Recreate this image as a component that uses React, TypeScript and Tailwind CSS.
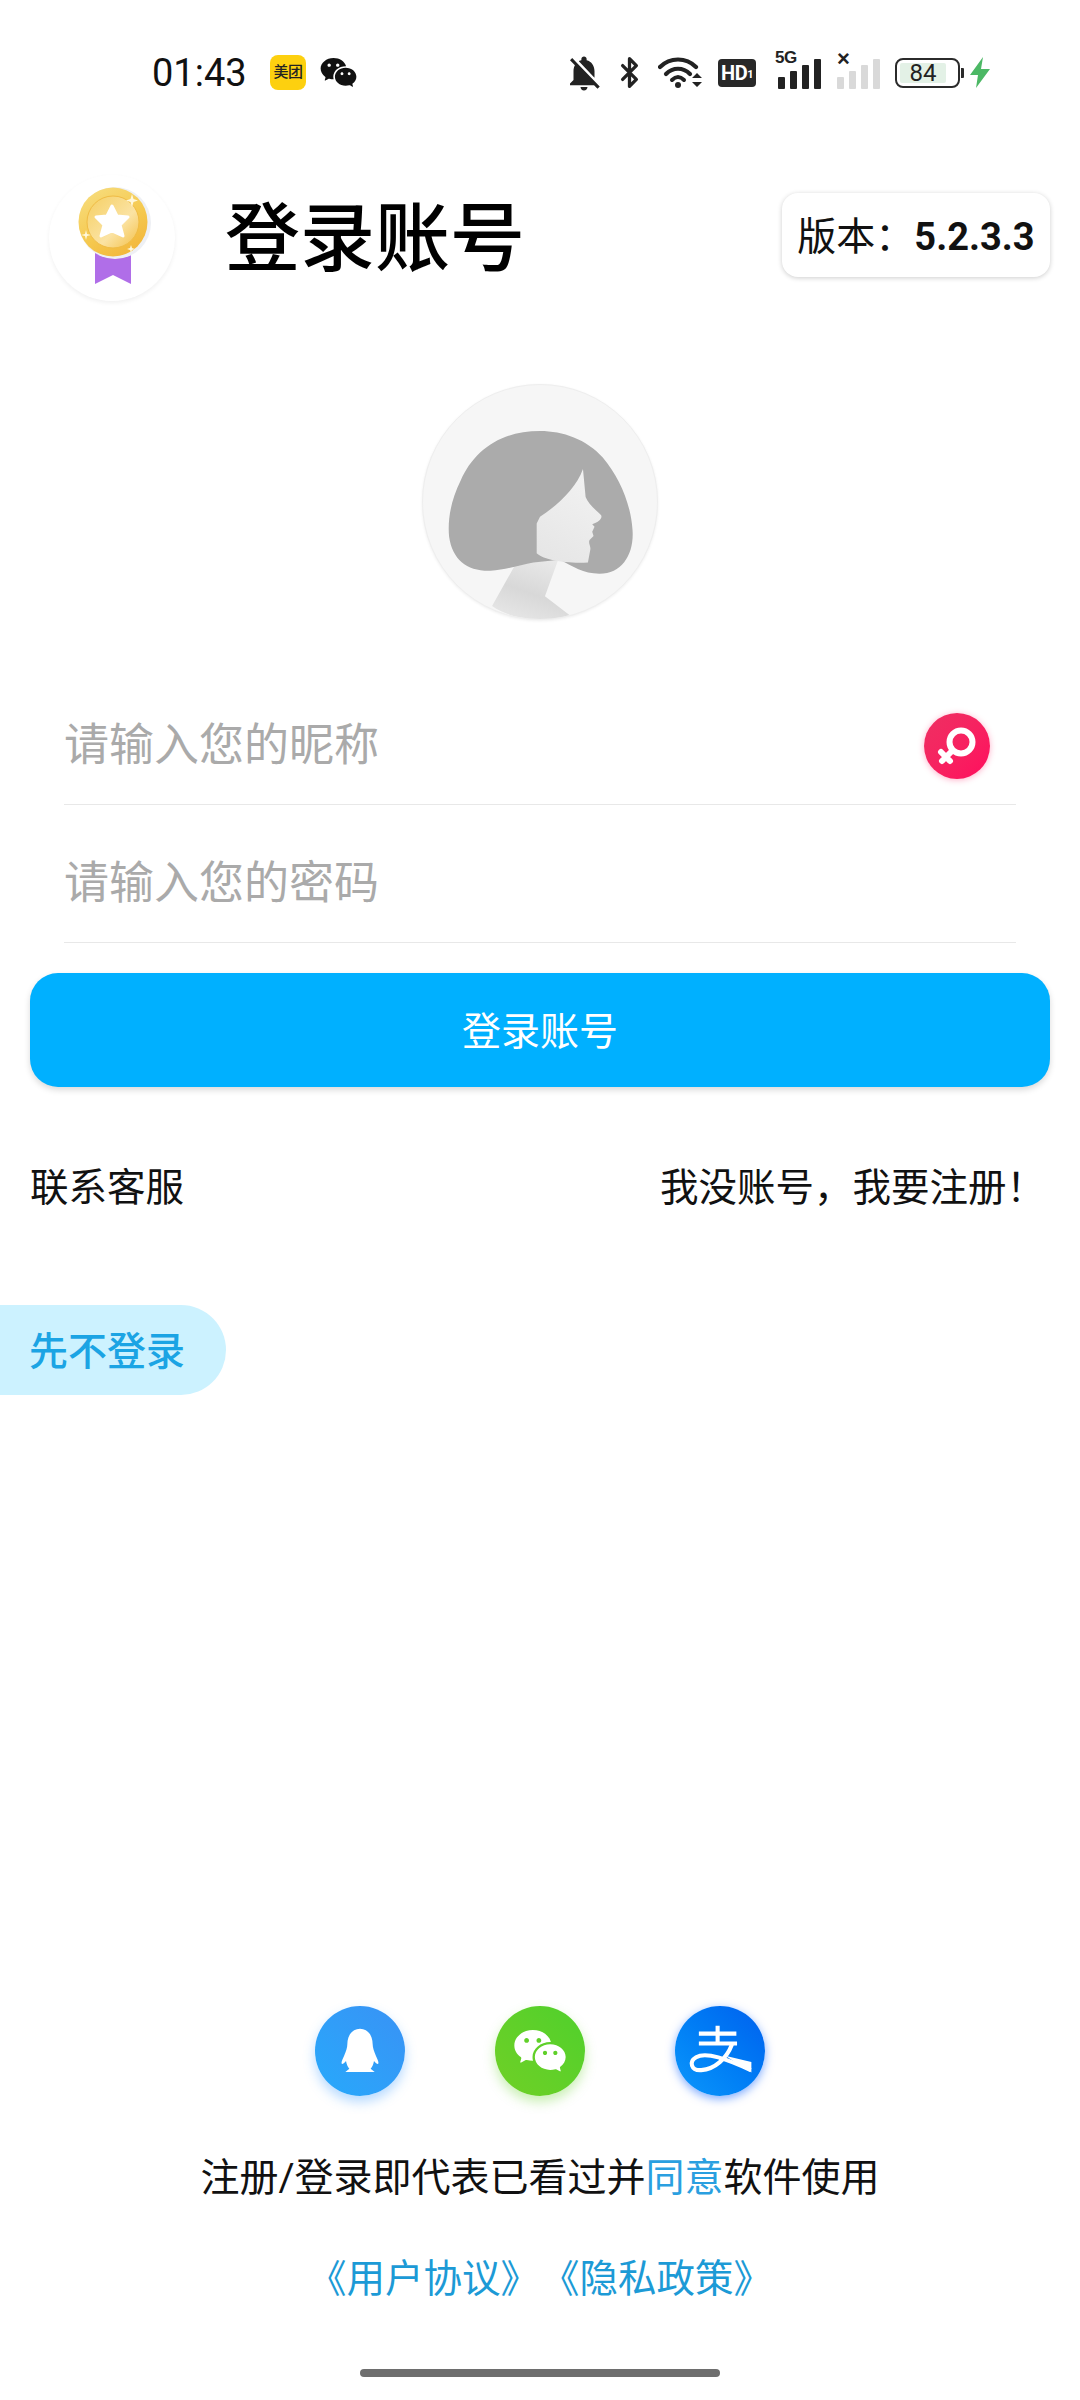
import { Bluetooth } from 'lucide-react';
import { MdNotificationsOff } from 'react-icons/md';
import { RiWechatFill } from 'react-icons/ri';

const cjk = "font-['Roboto','Noto_Sans_CJK_SC',sans-serif]";

function SignalBars({ color }: { color: string }) {
  return (
    <div className="flex items-end gap-[5px]">
      <div className={`h-[12px] w-[7px] rounded-[1px] ${color}`} />
      <div className={`h-[18px] w-[7px] rounded-[1px] ${color}`} />
      <div className={`h-[24px] w-[7px] rounded-[1px] ${color}`} />
      <div className={`h-[30px] w-[7px] rounded-[1px] ${color}`} />
    </div>
  );
}

function WifiIcon() {
  return (
    <svg width="46" height="34" viewBox="0 0 46 34" fill="none">
      <path d="M2 11 C 12 1, 28 1, 38 11" stroke="#222" strokeWidth="4.2" strokeLinecap="round" />
      <path d="M8 18 C 15 11, 25 11, 32 18" stroke="#222" strokeWidth="4.2" strokeLinecap="round" />
      <path d="M14 24 C 18 20, 22 20, 26 24" stroke="#222" strokeWidth="4" strokeLinecap="round" />
      <circle cx="20" cy="29" r="3" fill="#222" />
      <path d="M34 22 L39 17 L44 22 Z M34 26 L44 26 L39 31 Z" fill="#222" />
    </svg>
  );
}

function StatusBar() {
  return (
    <div className="flex h-[144px] items-center pl-[152px] pr-[90px] pt-[1px]">
      <span className="w-[118px] text-[38px] leading-none text-[#111] font-['Roboto',sans-serif]">01:43</span>
      <div className="flex h-[35px] w-[36px] items-center justify-center rounded-[8px] bg-[#fdd00f]">
        <span className={`text-[15px] font-medium leading-none tracking-[-0.5px] text-[#222] ${cjk}`}>美团</span>
      </div>
      <RiWechatFill size={39} className="ml-[13px] text-[#111]" />
      <div className="ml-auto flex items-center">
        <MdNotificationsOff size={42} className="text-[#222]" />
        <Bluetooth size={33} strokeWidth={2.4} className="ml-[8px] text-[#222]" />
        <div className="ml-[12px]"><WifiIcon /></div>
        <div className="ml-[14px] flex h-[28px] w-[38px] items-center justify-center rounded-[4px] bg-[#282828] font-['Roboto',sans-serif] text-[20px] font-bold leading-none tracking-[-0.5px] text-white">
          HD<span className="mt-[4px] text-[11px]">1</span>
        </div>
        <div className="relative ml-[19px] h-[32px] w-[47px]">
          <span className="absolute left-0 top-[-8px] font-['Liberation_Sans',sans-serif] text-[17px] font-bold leading-none tracking-[-0.5px] text-[#222]">5G</span>
          <div className="absolute bottom-0 left-[3px]"><SignalBars color="bg-[#222]" /></div>
        </div>
        <div className="relative ml-[15px] h-[32px] w-[45px]">
          <span className="absolute left-0 top-[-9px] font-['Liberation_Sans',sans-serif] text-[22px] font-bold leading-none text-[#222]">×</span>
          <div className="absolute bottom-0 left-0"><SignalBars color="bg-[#d9d9d9]" /></div>
        </div>
        <div className="ml-[13px] flex h-[30px] w-[65px] items-center rounded-[8px] border-[2px] border-[#2b2b2b] p-[3px]">
          <div className="flex h-full w-[46px] items-center justify-center rounded-[2px] bg-[#e3f1e6] font-['Roboto',sans-serif] text-[24px] leading-none text-[#222]">84</div>
        </div>
        <div className="ml-[1px] h-[10px] w-[3px] rounded-r-[1px] bg-[#2b2b2b]" />
        <svg width="20" height="31" viewBox="0 0 20 31" className="ml-[6px]">
          <path d="M13 0 L0 18 L8 18 L6 31 L20 12 L11 12 Z" fill="#4cb865" />
        </svg>
      </div>
    </div>
  );
}

function Medal() {
  return (
    <div className="h-[126px] w-[126px] rounded-full bg-white shadow-[0_2px_4px_rgba(0,0,0,0.06)]">
      <svg width="126" height="126" viewBox="0 0 126 126" className="block">
        <defs>
          <linearGradient id="gold" x1="0.2" y1="0" x2="0.8" y2="1">
            <stop offset="0" stopColor="#f7dc7c" />
            <stop offset="0.55" stopColor="#f5c94f" />
            <stop offset="1" stopColor="#f2b53a" />
          </linearGradient>
          <linearGradient id="goldIn" x1="0" y1="0" x2="1" y2="1">
            <stop offset="0" stopColor="#f5cf62" />
            <stop offset="0.6" stopColor="#fbe3a3" />
            <stop offset="1" stopColor="#f3bf45" />
          </linearGradient>
        </defs>
        <path d="M46 74 H82 V109 L64 100 L46 109 Z" fill="#b06ee8" />
        <circle cx="66" cy="48" r="36" fill="#eef0f4" />
        <circle cx="64" cy="47" r="34.5" fill="url(#gold)" />
        <circle cx="64" cy="47" r="26" fill="url(#goldIn)" stroke="#f0bc45" strokeWidth="1" />
        <path d="M63 31 L68 41 L79 42 L71 50 L74 61 L63 56 L52 61 L55 50 L47 42 L58 41 Z" fill="#fff" stroke="#fff" strokeWidth="3" strokeLinejoin="round" />
        <path d="M83 19 L84.5 24 L89 25.5 L84.5 27 L83 32 L81.5 27 L77 25.5 L81.5 24 Z M37 55 L38 59 L42 60 L38 61 L37 65 L36 61 L32 60 L36 59 Z M82 70 L83 73 L86 74 L83 75 L82 78 L81 75 L78 74 L81 73 Z" fill="#fff8dc" />
      </svg>
    </div>
  );
}

function Avatar() {
  return (
    <div className="h-[236px] w-[236px] overflow-hidden rounded-full border-[1px] border-[#eeeeee] bg-[#f6f6f6] shadow-[0_1px_3px_rgba(0,0,0,0.07)]">
      <svg width="234" height="234" viewBox="66 41 708 708" className="block">
        <defs>
          <linearGradient id="neck" x1="0.7" y1="0" x2="0.3" y2="1">
            <stop offset="0" stopColor="#ececec" />
            <stop offset="0.6" stopColor="#d8d8d8" />
            <stop offset="1" stopColor="#e6e6e6" />
          </linearGradient>
          <linearGradient id="face" x1="0.7" y1="0" x2="0.3" y2="1">
            <stop offset="0" stopColor="#f2f2f2" />
            <stop offset="1" stopColor="#e6e6e6" />
          </linearGradient>
        </defs>
        <path d="M345 585 L275 710 C 340 755 440 760 510 738 L435 680 L475 570 L410 545 Z" fill="url(#neck)" />
        <path d="M420 180 C 300 180 220 240 180 330 C 150 390 140 450 145 500 C 155 570 200 605 270 603 C 320 600 360 585 400 578 L 480 570 C 520 590 550 612 600 612 C 670 612 705 550 700 480 C 695 400 660 320 610 260 C 560 205 490 180 420 180 Z" fill="#ababab" />
        <path d="M550 295 C 530 350 480 400 420 440 L 410 460 L 410 550 C 430 570 500 582 565 578 L 572 540 C 575 530 565 520 570 510 L 582 498 L 578 485 L 585 470 L 578 462 C 595 458 610 445 605 435 C 590 420 565 400 558 380 Z" fill="url(#face)" />
      </svg>
    </div>
  );
}

function FemaleBadge() {
  return (
    <div className="flex h-[66px] w-[66px] items-center justify-center rounded-full bg-gradient-to-br from-[#ee2f62] to-[#ff0a5e] shadow-[0_1px_6px_rgba(255,30,100,0.35)]">
      <svg width="44" height="44" viewBox="0 0 44 44" fill="none" stroke="#fff" strokeWidth="6" strokeLinecap="round">
        <circle cx="26" cy="18" r="11.5" />
        <path d="M17.5 26.5 L7 37 M6 28 L15 37" />
      </svg>
    </div>
  );
}

function QqMark() {
  return (
    <svg width="90" height="90" viewBox="75 80 270 270">
      <path d="M210 148 C 185 148 172 170 172 195 C 172 205 168 215 163 228 C 158 240 152 250 156 254 C 160 254 165 248 168 245 C 170 255 172 262 178 268 L166 278 L254 278 L242 268 C 248 262 250 255 252 245 C 255 248 260 254 264 254 C 268 250 262 240 257 228 C 252 215 248 205 248 195 C 248 170 235 148 210 148 Z" fill="#fff" />
    </svg>
  );
}

function AlipayMark() {
  return (
    <svg width="90" height="90" viewBox="1158 82 264 264" fill="none" stroke="#fff">
      <path d="M1228 163 H1338 M1283 140 V192 M1228 192 H1340" strokeWidth="12" />
      <path d="M1325 195 C1310 235 1275 268 1235 270 C1205 272 1198 245 1220 232 C1250 215 1310 238 1380 270" strokeWidth="12" />
      <path d="M1305 228 L1382 246 L1382 277 Z" fill="#fff" stroke="none" />
    </svg>
  );
}

export default function App() {
  return (
    <div className={`flex min-h-[2400px] w-[1080px] flex-col bg-white ${cjk}`}>
      <StatusBar />

      <div className="flex h-[188px] items-center pl-[49px] pr-[30px]">
        <Medal />
        <h1 className="ml-[50px] mt-[2px] text-[75px] font-medium leading-none text-black">登录账号</h1>
        <div className="mb-[6px] ml-auto flex h-[84px] w-[268px] items-center justify-center rounded-[16px] bg-white pt-[4px] shadow-[0_1px_5px_rgba(0,0,0,0.2)]">
          <span className="text-[39px] leading-none text-[#111]">版本：</span>
          <span className="text-[38px] font-bold leading-none text-[#111]">5.2.3.3</span>
        </div>
      </div>

      <div className="mt-[52px] flex justify-center">
        <Avatar />
      </div>

      <div className="mx-[64px] mt-[67px] flex h-[118px] items-center justify-between border-b border-[#e8e8e8]">
        <span className="text-[45px] leading-none text-[#aaaaaa]">请输入您的昵称</span>
        <div className="mr-[26px]"><FemaleBadge /></div>
      </div>
      <div className="mx-[64px] mt-[20px] flex h-[118px] items-center border-b border-[#e8e8e8]">
        <span className="text-[45px] leading-none text-[#aaaaaa]">请输入您的密码</span>
      </div>

      <button className="mx-[30px] mt-[30px] flex h-[114px] items-center justify-center rounded-[28px] bg-[#00b0ff] pt-[5px] text-[39px] leading-none text-white shadow-[0_3px_6px_rgba(0,0,0,0.15)]">
        登录账号
      </button>

      <div className="mt-[71px] flex h-[60px] items-center justify-between pl-[30px] pr-[35px] text-[38.5px] leading-none text-[#111]">
        <span>联系客服</span>
        <span>我没账号，我要注册！</span>
      </div>

      <div className="mt-[87px] flex h-[90px] w-[226px] items-center rounded-r-full bg-[#ccf2ff] pl-[29px] pt-[4px] text-[39px] font-medium leading-none text-[#1ba4e4]">
        先不登录
      </div>

      <div className="mt-auto flex flex-col items-center pb-[23px]">
        <div className="flex gap-[90px]">
          <div className="h-[90px] w-[90px] rounded-full bg-gradient-to-bl from-[#3892f5] to-[#26a9fb] shadow-[0_6px_12px_rgba(50,150,255,0.35)]">
            <QqMark />
          </div>
          <div className="flex h-[90px] w-[90px] items-center justify-center rounded-full bg-gradient-to-tr from-[#6fd026] to-[#4fd02c] shadow-[0_6px_12px_rgba(100,210,40,0.35)]">
            <RiWechatFill size={56} className="text-white" />
          </div>
          <div className="h-[90px] w-[90px] rounded-full bg-gradient-to-bl from-[#0460ee] to-[#0f97fb] shadow-[0_3px_10px_rgba(0,90,255,0.5)]">
            <AlipayMark />
          </div>
        </div>
        <p className="mt-[59px] h-[46px] text-[39px] leading-[46px] text-[#111]">
          注册/登录即代表已看过并<span className="text-[#2a9fe0]">同意</span>软件使用
        </p>
        <p className="mt-[55px] flex h-[46px] gap-[2px] text-[38.5px] leading-[46px] text-[#1c9ad6]">
          <span>《用户协议》</span>
          <span>《隐私政策》</span>
        </p>
        <div className="mt-[67px] h-[8px] w-[360px] rounded-full bg-[#6e6e6e]" />
      </div>
    </div>
  );
}
